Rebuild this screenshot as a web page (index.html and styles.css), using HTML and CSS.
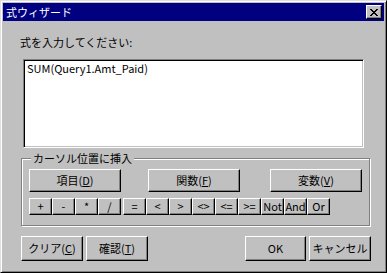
FILE: index.html
```html
<!DOCTYPE html>
<html lang="ja">
<head>
<meta charset="utf-8">
<title>式ウィザード</title>
<link rel="stylesheet" href="styles.css">
</head>
<body>
<div class="window">
  <div class="titlebar">
    <span class="title">式ウィザード</span>
    <button class="close" type="button" aria-label="閉じる">
      <svg width="8" height="7" viewBox="0 0 8 7" shape-rendering="crispEdges">
        <path d="M0 0h2v1h-2zM6 0h2v1h-2zM1 1h2v1h-2zM5 1h2v1h-2zM2 2h4v1h-4zM3 3h2v1h-2zM2 4h4v1h-4zM1 5h2v1h-2zM5 5h2v1h-2zM0 6h2v1h-2zM6 6h2v1h-2z" fill="#000"/>
      </svg>
    </button>
  </div>
  <div class="client">
    <div class="prompt">式を入力してください:</div>
    <div class="field">SUM(Query1.Amt_Paid)</div>
    <fieldset class="group">
      <legend class="legend">カーソル位置に挿入</legend>
      <div class="row-main">
        <button class="btn btn-main" type="button">項目(<u>D</u>)</button>
        <button class="btn btn-main btn-func" type="button">関数(<u>F</u>)</button>
        <button class="btn btn-main btn-var" type="button">変数(<u>V</u>)</button>
      </div>
      <div class="row-ops">
        <button class="btn op" type="button">+</button>
        <button class="btn op" type="button">-</button>
        <button class="btn op" type="button">*</button>
        <button class="btn op op-sep" type="button">/</button>
        <button class="btn op" type="button">=</button>
        <button class="btn op" type="button">&lt;</button>
        <button class="btn op" type="button">&gt;</button>
        <button class="btn op" type="button">&lt;&gt;</button>
        <button class="btn op" type="button">&lt;=</button>
        <button class="btn op" type="button">&gt;=</button>
        <button class="btn op" type="button">Not</button>
        <button class="btn op" type="button">And</button>
        <button class="btn op" type="button">Or</button>
      </div>
    </fieldset>
    <div class="row-bottom">
      <div class="btn-group">
        <button class="btn btn-foot" type="button">クリア(<u>C</u>)</button>
        <button class="btn btn-foot" type="button">確認(<u>T</u>)</button>
      </div>
      <div class="btn-group">
        <button class="btn btn-foot btn-ok" type="button">OK</button>
        <button class="btn btn-foot" type="button">キャンセル</button>
      </div>
    </div>
  </div>
</div>
</body>
</html>
```

FILE: styles.css
```css
* { box-sizing: border-box; }

html, body {
  margin: 0;
  padding: 0;
  background: #c0c0c0;
}

body {
  font-family: "Noto Sans CJK JP", "Noto Sans", sans-serif;
  font-size: 11px;
  line-height: 13px;
  color: #000;
}

.window {
  width: 387px;
  height: 273px;
  background: #c0c0c0;
  border: 1px solid;
  border-color: #dfdfdf #000 #000 #dfdfdf;
  box-shadow: inset 1px 1px 0 #fff, inset -1px -1px 0 #808080;
  padding: 2px;
  display: flex;
  flex-direction: column;
}

.titlebar {
  height: 18px;
  background: #000080;
  color: #fff;
  display: flex;
  align-items: flex-start;
  justify-content: space-between;
}

.title {
  padding: 3px 0 0 3px;
  font-size: 11px;
  line-height: 12px;
}

.close {
  width: 16px;
  height: 14px;
  margin: 2px 2px 0 0;
  padding: 0;
  background: #c0c0c0;
  border: 1px solid;
  border-color: #fff #000 #000 #fff;
  box-shadow: inset -1px -1px 0 #808080;
  display: flex;
  align-items: center;
  justify-content: center;
}

.close svg { display: block; margin: 0 0 0 0; }

.client {
  flex: 1;
  display: flex;
  flex-direction: column;
  align-items: flex-start;
}

.prompt {
  margin: 15px 0 0 17px;
  height: 13px;
}

.field {
  margin: 10px 0 0 20px;
  width: 341px;
  height: 89px;
  background: #fff;
  border: 1px solid;
  border-color: #808080 #fff #fff #808080;
  box-shadow: inset 1px 1px 0 #000, inset -1px -1px 0 #c0c0c0;
  padding: 2px 3px;
  line-height: 12px;
}

.group {
  margin: 4px 0 0 18px;
  width: 349px;
  height: 74px;
  padding: 0 0 0 7px;
  border: 1px solid #808080;
  box-shadow: inset 1px 1px 0 #fff, 1px 1px 0 #fff;
  min-inline-size: 0;
}

.legend {
  margin-left: 2px;
  padding: 0 2px;
  background: #c0c0c0;
  line-height: 13px;
}

.btn {
  font: inherit;
  color: #000;
  background: #c0c0c0;
  border: 1px solid;
  border-color: #fff #000 #000 #fff;
  box-shadow: inset -1px -1px 0 #808080;
  padding: 0;
  margin: 0;
  display: flex;
  align-items: center;
  justify-content: center;
  white-space: nowrap;
}

.btn u { text-underline-offset: 1px; }

.row-main {
  display: flex;
  margin-top: 4px;
}

.btn-main {
  width: 92px;
  height: 23px;
}

.btn-func { margin-left: 27px; }
.btn-var { margin-left: 30px; }

.row-ops {
  display: flex;
  margin-top: 6px;
}

.op {
  width: 23px;
  height: 17px;
}

.op-sep { margin-right: 2px; }

.row-bottom {
  margin-top: 10px;
  align-self: stretch;
  padding: 0 13px 0 18px;
  display: flex;
  justify-content: space-between;
}

.btn-group {
  display: flex;
  gap: 3px;
}

.btn-foot {
  width: 62px;
  height: 25px;
}

.btn-ok { width: 61px; }
```
